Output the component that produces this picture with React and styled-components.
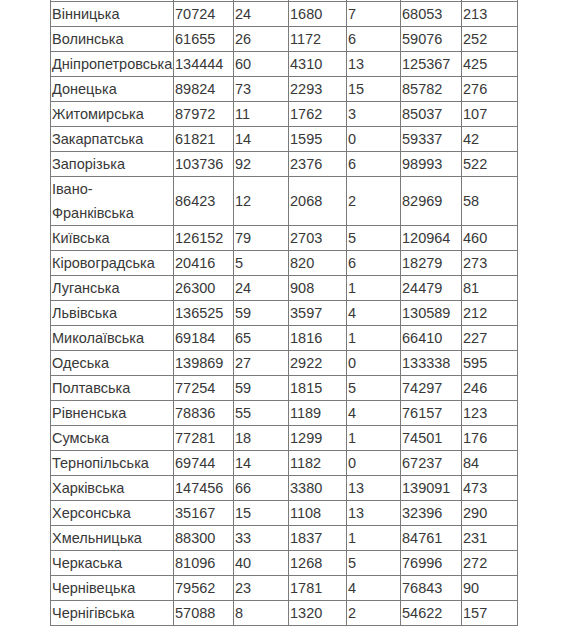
import React from 'react'
import styled, { createGlobalStyle } from 'styled-components'

const GlobalStyle = createGlobalStyle`
  body {
    margin: 0;
    background: #fff;
    font-family: "Liberation Sans", Arial, sans-serif;
  }
`

const Page = styled.div`
  display: flex;
  padding-left: 50px;
  overflow: hidden;
  height: 630px;
`

const Table = styled.table`
  margin-top: -24px;
  table-layout: fixed;
  width: 468px;
  border-collapse: separate;
  border-spacing: 0;
  border-top: 1px solid #7b7b7b;
  border-left: 1px solid #7b7b7b;
  align-self: flex-start;
  font-size: 14.5px;
  color: #383838;
`

const Cell = styled.td`
  box-sizing: border-box;
  padding: 0 0 0 1px;
  height: 25px;
  line-height: 24px;
  vertical-align: middle;
  border-right: 1px solid #7b7b7b;
  border-bottom: 1px solid #7b7b7b;
`

const widths = [123, 60, 55, 58, 54, 61, 56]

// first row sits above the visible area, only its bottom border shows
const rows = [
  ['', '', '', '', '', '', ''],
  ['Вінницька', 70724, 24, 1680, 7, 68053, 213],
  ['Волинська', 61655, 26, 1172, 6, 59076, 252],
  ['Дніпропетровська', 134444, 60, 4310, 13, 125367, 425],
  ['Донецька', 89824, 73, 2293, 15, 85782, 276],
  ['Житомирська', 87972, 11, 1762, 3, 85037, 107],
  ['Закарпатська', 61821, 14, 1595, 0, 59337, 42],
  ['Запорізька', 103736, 92, 2376, 6, 98993, 522],
  ['Івано-Франківська', 86423, 12, 2068, 2, 82969, 58],
  ['Київська', 126152, 79, 2703, 5, 120964, 460],
  ['Кіровоградська', 20416, 5, 820, 6, 18279, 273],
  ['Луганська', 26300, 24, 908, 1, 24479, 81],
  ['Львівська', 136525, 59, 3597, 4, 130589, 212],
  ['Миколаївська', 69184, 65, 1816, 1, 66410, 227],
  ['Одеська', 139869, 27, 2922, 0, 133338, 595],
  ['Полтавська', 77254, 59, 1815, 5, 74297, 246],
  ['Рівненська', 78836, 55, 1189, 4, 76157, 123],
  ['Сумська', 77281, 18, 1299, 1, 74501, 176],
  ['Тернопільська', 69744, 14, 1182, 0, 67237, 84],
  ['Харківська', 147456, 66, 3380, 13, 139091, 473],
  ['Херсонська', 35167, 15, 1108, 13, 32396, 290],
  ['Хмельницька', 88300, 33, 1837, 1, 84761, 231],
  ['Черкаська', 81096, 40, 1268, 5, 76996, 272],
  ['Чернівецька', 79562, 23, 1781, 4, 76843, 90],
  ['Чернігівська', 57088, 8, 1320, 2, 54622, 157],
]

export default function App() {
  return (
    <>
      <GlobalStyle />
      <Page>
        <Table>
          <colgroup>
            {widths.map((w, i) => (
              <col key={i} style={{ width: w }} />
            ))}
          </colgroup>
          <tbody>
            {rows.map((r, i) => (
              <tr key={i}>
                {r.map((v, j) => (
                  <Cell key={j}>{v}</Cell>
                ))}
              </tr>
            ))}
          </tbody>
        </Table>
      </Page>
    </>
  )
}
